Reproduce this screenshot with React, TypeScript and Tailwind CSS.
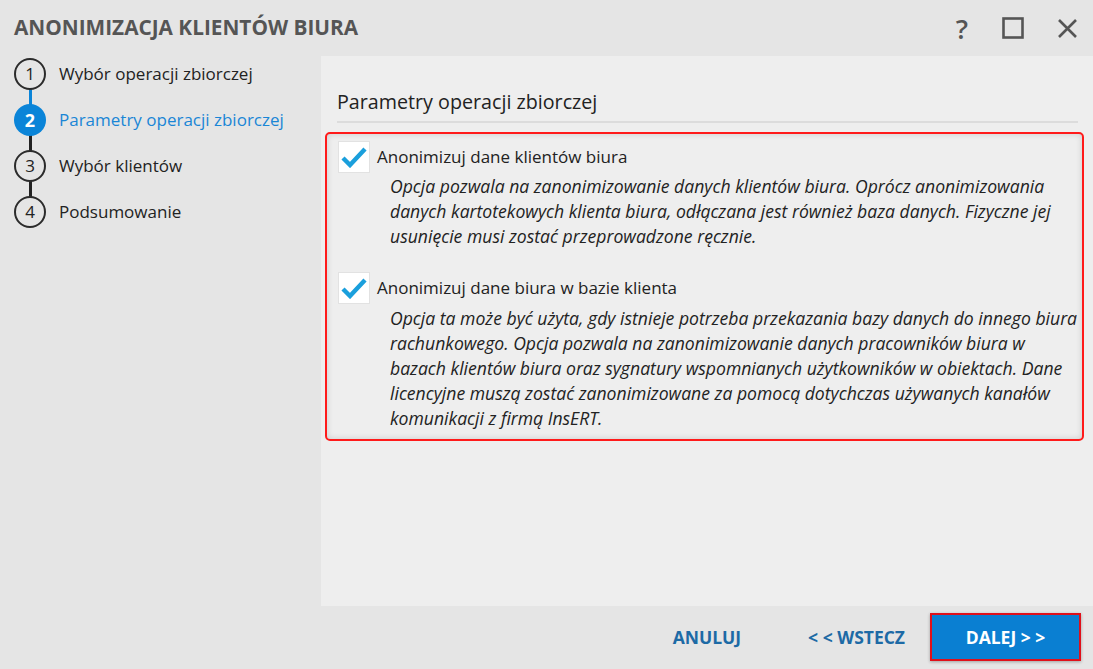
import React from "react";

const font = { fontFamily: '"Segoe UI", "Open Sans", "Noto Sans", sans-serif' };

function Check() {
  return (
    <div className="w-[32px] h-[32px] bg-white border border-[#e2e2e2] flex items-center justify-center shrink-0">
      <svg width="26" height="22" viewBox="0 0 26 22">
        <path d="M2 12 L9 19 L24 3" fill="none" stroke="#1a9fdc" strokeWidth="4.4" strokeLinecap="butt" strokeLinejoin="miter" />
      </svg>
    </div>
  );
}

function Step({ n, label, active }: { n: number; label: string; active?: boolean }) {
  return (
    <div className="flex items-center h-[32px]">
      <div
        className={
          active
            ? "w-[32px] h-[32px] rounded-full bg-[#0a84d8] text-white font-bold flex items-center justify-center text-[18px] z-10"
            : "w-[32px] h-[32px] rounded-full border-2 border-[#2b2b2b] bg-[#e5e5e5] text-[#222] flex items-center justify-center text-[17px] z-10"
        }
      >
        {n}
      </div>
      <span className={"ml-[13px] text-[17px] " + (active ? "text-[#1a86d6]" : "text-[#222]")}>{label}</span>
    </div>
  );
}

export default function App() {
  return (
    <div className="w-[1093px] h-[669px] bg-[#e5e5e5] flex flex-col overflow-hidden" style={font}>
      <div className="h-[56px] flex items-center pl-[14px] shrink-0">
        <div className="text-[20.8px] font-bold text-[#555]">ANONIMIZACJA KLIENTÓW BIURA</div>
        <div className="ml-auto flex items-center text-[#555] mr-[15px]">
          <span className="text-[27px] font-semibold leading-none w-[20px] text-center">?</span>
          <svg className="ml-[30px]" width="22" height="22" viewBox="0 0 22 22"><rect x="1.5" y="1.5" width="19" height="19" fill="none" stroke="#555" strokeWidth="2.6" /></svg>
          <svg className="ml-[33px]" width="21" height="21" viewBox="0 0 21 21"><path d="M2 2 L19 19 M19 2 L2 19" stroke="#555" strokeWidth="2.6" /></svg>
        </div>
      </div>
      <div className="flex flex-1 min-h-0">
        <div className="w-[321px] shrink-0 pl-[14px] pt-[2px]">
          <div className="relative flex flex-col gap-[14px]">
            <div className="absolute left-[15px] top-[30px] w-[3px] h-[18px] bg-[#0a84d8]" />
            <div className="absolute left-[15px] top-[76px] w-[3px] h-[18px] bg-[#222]" />
            <div className="absolute left-[15px] top-[122px] w-[3px] h-[18px] bg-[#222]" />
            <Step n={1} label="Wybór operacji zbiorczej" />
            <Step n={2} label="Parametry operacji zbiorczej" active />
            <Step n={3} label="Wybór klientów" />
            <Step n={4} label="Podsumowanie" />
          </div>
        </div>
        <div className="flex-1 flex flex-col">
          <div className="h-[550px] bg-[#eeeeee] pl-[4px] pr-[9px] pt-[33px]">
            <div className="ml-[12px] mr-[6px] text-[19.7px] text-[#222] pb-[6px] border-b-2 border-[#dcdcdc] leading-[26px]">
              Parametry operacji zbiorczej
            </div>
            <div className="mt-[9px] h-[309px] border-2 border-[#ff1a1a] rounded-[5px] shadow-[inset_0_0_6px_rgba(0,0,0,0.15)] pl-[11px] pt-[7px]">
              <div className="flex items-center">
                <Check />
                <span className="ml-[7px] text-[17px] text-[#222]">Anonimizuj dane klientów biura</span>
              </div>
              <div className="ml-[52px] mt-[1px] italic text-[17.6px] leading-[25px] text-[#222] whitespace-nowrap">
                Opcja pozwala na zanonimizowanie danych klientów biura. Oprócz anonimizowania
                <br />
                danych kartotekowych klienta biura, odłączana jest również baza danych. Fizyczne jej
                <br />
                usunięcie musi zostać przeprowadzone ręcznie.
              </div>
              <div className="flex items-center mt-[23px]">
                <Check />
                <span className="ml-[7px] text-[17px] text-[#222]">Anonimizuj dane biura w bazie klienta</span>
              </div>
              <div className="ml-[52px] mt-[2px] italic text-[17.6px] leading-[25px] text-[#222] whitespace-nowrap">
                Opcja ta może być użyta, gdy istnieje potrzeba przekazania bazy danych do innego biura
                <br />
                rachunkowego. Opcja pozwala na zanonimizowanie danych pracowników biura w
                <br />
                bazach klientów biura oraz sygnatury wspomnianych użytkowników w obiektach. Dane
                <br />
                licencyjne muszą zostać zanonimizowane za pomocą dotychczas używanych kanałów
                <br />
                komunikacji z firmą InsERT.
              </div>
            </div>
          </div>
          <div className="flex-1 flex items-center justify-end pr-[12px] pb-[1px]">
            <button className="text-[17.5px] font-bold text-[#1d6aa5] mr-[67px]">ANULUJ</button>
            <button className="text-[17.5px] font-bold text-[#1d6aa5] mr-[25px]">&lt; &lt; WSTECZ</button>
            <button className="w-[151px] h-[48px] bg-[#0a7fd2] border-2 border-[#e0101a] text-white font-bold text-[17.5px] shadow-[0_1px_3px_rgba(0,0,0,0.3)]">
              DALEJ &gt; &gt;
            </button>
          </div>
        </div>
      </div>
    </div>
  );
}
